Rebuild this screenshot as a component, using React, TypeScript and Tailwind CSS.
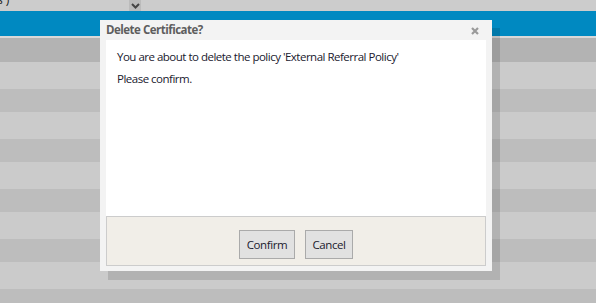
const rows = [
  { h: "h-[24px]", c: "bg-[#b3b3b3]" },
  { h: "h-[27px]", c: "bg-[#cbcbcb]" },
  { h: "h-[23px]", c: "bg-[#bdbdbd]" },
  { h: "h-[27px]", c: "bg-[#cbcbcb]" },
  { h: "h-[23px]", c: "bg-[#bdbdbd]" },
  { h: "h-[27px]", c: "bg-[#cbcbcb]" },
  { h: "h-[23px]", c: "bg-[#bdbdbd]" },
  { h: "h-[27px]", c: "bg-[#cbcbcb]" },
  { h: "h-[23px]", c: "bg-[#bdbdbd]" },
  { h: "h-[27px]", c: "bg-[#cbcbcb]" },
  { h: "h-[23px]", c: "bg-[#bdbdbd]" },
]

const App = () => {
  return (
    <div className="relative w-[596px] h-[303px] overflow-hidden bg-[#cbcbcb] font-['Open_Sans','Liberation_Sans',sans-serif]">
      {/* page behind the dialog */}
      <div className="flex h-[11px] bg-[#cccccc] overflow-hidden">
        <div className="w-[129px] relative">
          <span className="absolute left-[-3px] top-[-9px] text-[12px] text-[#222]">s )</span>
        </div>
        <div className="w-[12px] bg-[#bbbbbb] flex items-center justify-center">
          <svg width="9" height="6" viewBox="0 0 9 6">
            <path d="M1 1 L4.5 4.5 L8 1" stroke="#444" strokeWidth="2" fill="none" />
          </svg>
        </div>
      </div>
      <div className="h-[25px] bg-[#0089c1]" />
      <div className="h-[2px] bg-[#d9d9d9]" />
      {rows.map((r, i) => (
        <div key={i} className={`${r.h} ${r.c}`} />
      ))}

      {/* dialog shadow */}
      <div className="absolute left-[108px] top-[28px] w-[392px] h-[252px] bg-black/[0.12]" />

      {/* dialog */}
      <div className="absolute left-[100px] top-[20px] w-[392px] h-[251px] bg-[#f3f3f3] flex flex-col">
        <div className="h-[20px] flex items-center justify-between pl-[6px] pr-[13px]">
          <span className="text-[11.5px] font-bold tracking-[-0.5px] text-[#5e5e5e]">Delete Certificate?</span>
          <svg width="8" height="8" viewBox="0 0 8 8" className="mt-[1px]">
            <path d="M1 1 L7 7 M7 1 L1 7" stroke="#9a9a9a" strokeWidth="2.2" />
          </svg>
        </div>
        <div className="mx-[6px] h-[176px] bg-white pl-[11px] pt-[6px] text-[11.5px] tracking-[-0.5px] text-[#20202e] leading-[22px]">
          <p>You are about to delete the policy 'External Referral Policy'</p>
          <p>Please confirm.</p>
        </div>
        <div className="mx-[6px] h-[50px] border border-[#cccccc] bg-[#f1eee8] flex justify-center gap-[10px] pt-[13px]">
          <button className="w-[56px] h-[29px] border border-[#aaaaaa] bg-[#e1e1e1] text-[11.5px] tracking-[-0.4px] text-[#20202e]">
            Confirm
          </button>
          <button className="w-[48px] h-[29px] border border-[#aaaaaa] bg-[#e1e1e1] text-[11.5px] tracking-[-0.4px] text-[#20202e]">
            Cancel
          </button>
        </div>
      </div>
    </div>
  )
}

export default App
